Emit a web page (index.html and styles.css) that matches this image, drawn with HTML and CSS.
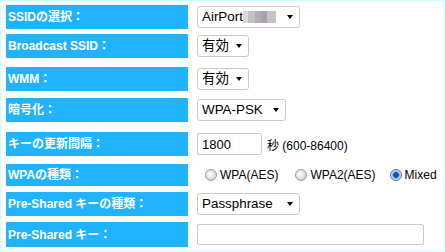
FILE: index.html
```html
<!DOCTYPE html>
<html lang="ja">
<head>
<meta charset="utf-8">
<link rel="stylesheet" href="styles.css">
</head>
<body>
<div class="panel">
  <div class="row r1">
    <div class="label">SSIDの選択：</div>
    <div class="field">
      <span class="sel w-ssid"><span class="val">AirPort<span class="blur"></span></span></span>
    </div>
  </div>
  <div class="row r2">
    <div class="label">Broadcast SSID：</div>
    <div class="field"><span class="sel w-small"><span class="val">有効</span></span></div>
  </div>
  <div class="row r3">
    <div class="label">WMM：</div>
    <div class="field"><span class="sel w-small"><span class="val">有効</span></span></div>
  </div>
  <div class="row r4">
    <div class="label">暗号化：</div>
    <div class="field"><span class="sel w-enc"><span class="val">WPA-PSK</span></span></div>
  </div>
  <div class="row r5">
    <div class="label">キーの更新間隔：</div>
    <div class="field">
      <span class="inp w-num">1800</span>
      <span class="unit">秒 (600-86400)</span>
    </div>
  </div>
  <div class="row r6">
    <div class="label">WPAの種類：</div>
    <div class="field radios">
      <span class="radio"><span class="dot"></span>WPA(AES)</span>
      <span class="radio"><span class="dot"></span>WPA2(AES)</span>
      <span class="radio"><span class="dot on"></span>Mixed</span>
    </div>
  </div>
  <div class="row r7">
    <div class="label">Pre-Shared キーの種類：</div>
    <div class="field"><span class="sel w-ssid"><span class="val">Passphrase</span></span></div>
  </div>
  <div class="row r8">
    <div class="label">Pre-Shared キー：</div>
    <div class="field"><span class="inp w-key"></span></div>
  </div>
</div>
</body>
</html>
```
FILE: styles.css
```css
html, body {
  margin: 0;
  padding: 0;
  background: #ffffff;
}
.panel {
  width: 445px;
  height: 251px;
  border: 1px solid #ccffff;
  padding: 4px 0 0 5px;
  box-sizing: border-box;
  display: flex;
  flex-direction: column;
  font-family: "Liberation Sans", Arial, sans-serif;
}
.row {
  display: flex;
  align-items: center;
  height: 24px;
}
.r2 { margin-top: 5px; }
.r3 { margin-top: 9px; }
.r4 { margin-top: 7px; }
.r5 { margin-top: 10px; }
.r6 { margin-top: 8px; height: 22px; }
.r7 { margin-top: 6px; }
.r8 { margin-top: 6px; height: 25px; }
.label {
  width: 182px;
  flex-shrink: 0;
  height: 100%;
  background: #22b3ff;
  color: #ffffff;
  font-family: "Liberation Sans", "Noto Sans CJK JP", sans-serif;
  font-weight: bold;
  font-size: 12px;
  line-height: 1;
  display: flex;
  align-items: center;
  padding-left: 2px;
  box-sizing: border-box;
  white-space: nowrap;
  overflow: hidden;
}
.field {
  margin-left: 9px;
  display: flex;
  align-items: center;
  height: 100%;
}
.sel {
  position: relative;
  flex-shrink: 0;
  height: 22px;
  border: 1px solid #c9c9c9;
  border-radius: 3px;
  background: #ffffff;
  box-sizing: border-box;
  display: flex;
  align-items: center;
  padding-left: 4px;
  font-size: 13.4px;
  color: #000000;
  font-family: "Liberation Sans", "Noto Sans CJK JP", sans-serif;
}
.sel::after {
  content: "";
  position: absolute;
  right: 6px;
  top: 8px;
  border-left: 3.5px solid transparent;
  border-right: 3.5px solid transparent;
  border-top: 4px solid #000000;
}
.val {
  display: flex;
  align-items: center;
  line-height: 1;
}
.blur {
  display: inline-block;
  width: 33px;
  height: 12px;
  background:
    linear-gradient(90deg, #dcd8dc 0 5px, #c6c0c8 5px 12px, #b4acb4 12px 18px, #a8a0aa 18px 24px, #c8c2c8 24px 33px);
}
.w-ssid { width: 103px; }
.w-small { width: 52px; }
.w-enc { width: 89px; }
.inp {
  flex-shrink: 0;
  height: 22px;
  border: 1px solid #c9c9c9;
  border-radius: 2px;
  box-sizing: border-box;
  display: flex;
  align-items: center;
  padding-left: 4px;
  font-size: 13px;
  color: #000000;
}
.w-num { width: 65px; }
.w-key { width: 227px; height: 21px; }
.unit {
  margin-left: 5px;
  font-size: 12px;
  color: #000000;
  font-family: "Liberation Sans", "Noto Sans CJK JP", sans-serif;
}
.radios {
  margin-left: 17px;
  font-size: 12px;
  font-family: "Liberation Sans", Arial, sans-serif;
}
.radio {
  display: flex;
  align-items: center;
  margin-right: 17px;
  color: #000000;
}
.radio:nth-child(2) { margin-right: 14px; }
.dot {
  width: 12px;
  height: 12px;
  border-radius: 50%;
  border: 1px solid #9a9a9a;
  background: radial-gradient(circle at 40% 40%, #ffffff 0, #dcdcdc 60%, #bdbdbd 100%);
  box-sizing: border-box;
  margin-right: 3px;
}
.dot.on {
  background: radial-gradient(circle, #1e4fa8 0 2.5px, #5aa0e8 3px, #cfe2f6 4.5px);
  border-color: #4a6ea8;
}
```
